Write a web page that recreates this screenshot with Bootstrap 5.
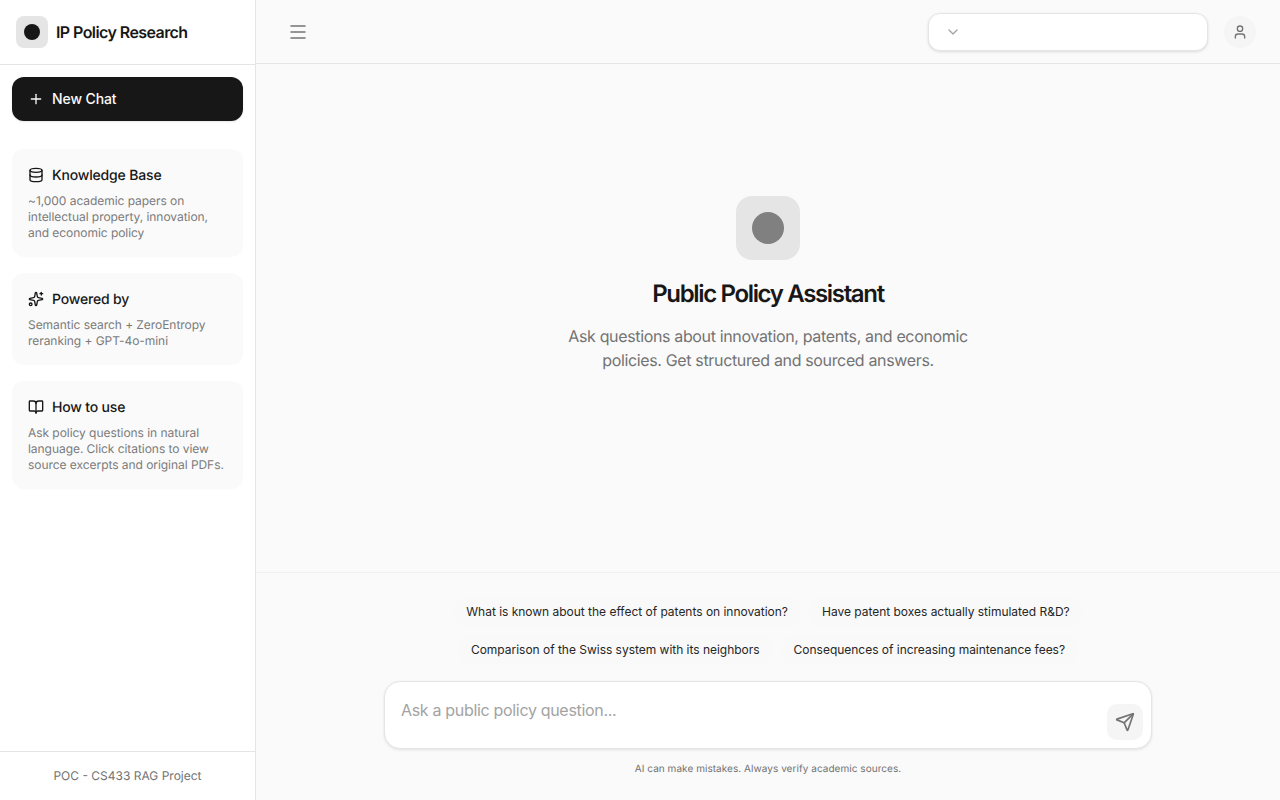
<!DOCTYPE html>
<html lang="en">
<head>
    <meta charset="UTF-8">
    <meta name="viewport" content="width=device-width, initial-scale=1.0">
    <title>IP Policy Research</title>
    <link href="https://cdn.jsdelivr.net/npm/bootstrap@5.3.0/dist/css/bootstrap.min.css" rel="stylesheet">
    <style>
        html, body { height: 100%; }
        body { font-family: Inter, "Liberation Sans", sans-serif; background: #fafafa; color: #171717; overflow: hidden; text-rendering: geometricPrecision; -webkit-font-smoothing: antialiased; }
        svg.ic { fill: none; stroke: currentColor; stroke-width: 2; stroke-linecap: round; stroke-linejoin: round; flex-shrink: 0; }

        .sidebar { width: 256px; background: #fff; border-right: 1px solid #e5e5e5; }
        .side-body { padding: 12px 12px 0; }
        .brand { height: 65px; padding: 0 16px; border-bottom: 1px solid #e5e5e5; }
        .brand-logo { width: 32px; height: 32px; border-radius: 8px; background: #e5e5e5; }
        .brand-logo span { width: 16px; height: 16px; border-radius: 50%; background: #171717; }
        .brand-name { font-size: 16px; font-weight: 600; letter-spacing: -0.58px; }
        .btn-new { height: 44px; padding: 0 15px; border-radius: 12px; background: #171717; color: #fafafa; font-size: 14px; font-weight: 500; letter-spacing: -0.1px; box-shadow: 0 1px 2px rgba(0,0,0,.1); }
        .btn-new:hover { background: #171717; color: #fafafa; }
        .btn-new span { margin-bottom: 2px; }
        .info-list { margin-top: 28px; }
        .info-card { background: #fafafa; border-radius: 12px; padding: 16px; }
        .info-title { height: 20px; font-size: 14px; font-weight: 500; line-height: 20px; letter-spacing: -0.17px; margin-bottom: 8px; }
        .info-title span { margin-top: 2px; }
        .info-text { font-size: 12px; line-height: 16px; letter-spacing: -0.05px; color: #7a7a7a; margin: 0; }
        .side-foot { height: 49px; border-top: 1px solid #e5e5e5; font-size: 12px; color: #737373; }

        .topbar { height: 64px; padding: 0 24px 0 32px; border-bottom: 1px solid #e5e5e5; }
        .menu-btn { color: #737373; }
        .menu-btn svg { stroke-width: 1.5; }
        .picker { width: 280px; height: 38px; padding: 0 16px; background: #fff; border: 1px solid #e5e5e5; border-radius: 12px; box-shadow: 0 1px 3px rgba(0,0,0,.12); color: #a3a3a3; }
        .avatar { width: 32px; height: 32px; border-radius: 50%; background: #f5f5f5; color: #737373; }

        .hero { padding-bottom: 68px; }
        .hero-logo { width: 64px; height: 64px; border-radius: 16px; background: #e5e5e5; margin-bottom: 18px; }
        .hero-logo span { width: 32px; height: 32px; border-radius: 50%; background: #808080; }
        .hero-title { font-size: 24px; line-height: 32px; font-weight: 600; letter-spacing: -1.35px; margin-bottom: 14px; }
        .hero-text { width: 448px; font-size: 16px; line-height: 24px; letter-spacing: -0.35px; color: #737373; margin: 0; }

        .composer { height: 228px; border-top: 1px solid #f0f0f0; padding-top: 24px; }
        .chips { gap: 8px; }
        .chip { height: 30px; padding: 0 13px; border-radius: 15px; background: #f9f9f9; font-size: 12px; letter-spacing: -0.02px; color: #262626; border: 0; }
        .inputbox { width: 768px; height: 68px; margin-top: 16px; padding: 16px; background: #fff; border: 1px solid #e5e5e5; border-radius: 16px; box-shadow: 0 1px 3px rgba(0,0,0,.1); }
        .inputbox input { border: 0; outline: 0; padding: 0; width: 100%; font-size: 16px; line-height: 24px; letter-spacing: -0.32px; color: #171717; background: transparent; display: block; }
        .inputbox input::placeholder { color: #a3a3a3; opacity: 1; }
        .send { position: absolute; right: 8px; bottom: 8px; width: 36px; height: 36px; border-radius: 10px; background: #f5f5f5; color: #737373; border: 0; }
        .note { font-size: 10px; line-height: 14px; letter-spacing: 0.05px; color: #737373; margin: 13px 0 0; }
    </style>
</head>
<body>
    <div class="d-flex h-100">
        <!-- sidebar -->
        <aside class="sidebar d-flex flex-column flex-shrink-0">
            <div class="brand d-flex align-items-center gap-2">
                <div class="brand-logo d-flex align-items-center justify-content-center"><span></span></div>
                <div class="brand-name">IP Policy Research</div>
            </div>
            <div class="side-body flex-grow-1 d-flex flex-column">
                <button class="btn btn-new d-flex align-items-center gap-2 w-100" type="button">
                    <svg class="ic" width="16" height="16" viewBox="0 0 24 24"><path d="M5 12h14"/><path d="M12 5v14"/></svg>
                    <span>New Chat</span>
                </button>
                <div class="info-list d-flex flex-column gap-3">
                    <div class="info-card">
                        <div class="info-title d-flex align-items-center gap-2">
                            <svg class="ic" width="16" height="16" viewBox="0 0 24 24"><ellipse cx="12" cy="5" rx="9" ry="3"/><path d="M3 5V19A9 3 0 0 0 21 19V5"/><path d="M3 12A9 3 0 0 0 21 12"/></svg>
                            <span>Knowledge Base</span>
                        </div>
                        <p class="info-text">~1,000 academic papers on intellectual property, innovation, and economic policy</p>
                    </div>
                    <div class="info-card">
                        <div class="info-title d-flex align-items-center gap-2">
                            <svg class="ic" width="16" height="16" viewBox="0 0 24 24"><path d="M11.017 2.814a1 1 0 0 1 1.966 0l1.051 5.558a2 2 0 0 0 1.594 1.594l5.558 1.051a1 1 0 0 1 0 1.966l-5.558 1.051a2 2 0 0 0-1.594 1.594l-1.051 5.558a1 1 0 0 1-1.966 0l-1.051-5.558a2 2 0 0 0-1.594-1.594l-5.558-1.051a1 1 0 0 1 0-1.966l5.558-1.051a2 2 0 0 0 1.594-1.594z"/><path d="M20 2v4"/><path d="M22 4h-4"/><circle cx="4" cy="20" r="2"/></svg>
                            <span>Powered by</span>
                        </div>
                        <p class="info-text">Semantic search + ZeroEntropy reranking + GPT-4o-mini</p>
                    </div>
                    <div class="info-card">
                        <div class="info-title d-flex align-items-center gap-2">
                            <svg class="ic" width="16" height="16" viewBox="0 0 24 24"><path d="M12 7v14"/><path d="M3 18a1 1 0 0 1-1-1V4a1 1 0 0 1 1-1h5a4 4 0 0 1 4 4 4 4 0 0 1 4-4h5a1 1 0 0 1 1 1v13a1 1 0 0 1-1 1h-6a3 3 0 0 0-3 3 3 3 0 0 0-3-3z"/></svg>
                            <span>How to use</span>
                        </div>
                        <p class="info-text">Ask policy questions in natural language. Click citations to view source excerpts and original PDFs.</p>
                    </div>
                </div>
            </div>
            <div class="side-foot d-flex align-items-center justify-content-center">POC - CS433 RAG Project</div>
        </aside>

        <!-- main -->
        <main class="flex-grow-1 d-flex flex-column">
            <header class="topbar d-flex align-items-center justify-content-between">
                <div class="menu-btn d-flex">
                    <svg class="ic" width="20" height="24" viewBox="0 0 20 24"><path d="M3 6h14"/><path d="M3 12h14"/><path d="M3 18h14"/></svg>
                </div>
                <div class="d-flex align-items-center gap-3">
                    <div class="picker d-flex align-items-center">
                        <svg class="ic" width="16" height="16" viewBox="0 0 24 24"><path d="m6 9 6 6 6-6"/></svg>
                    </div>
                    <div class="avatar d-flex align-items-center justify-content-center">
                        <svg class="ic" width="16" height="16" viewBox="0 0 24 24"><path d="M19 21v-2a4 4 0 0 0-4-4H9a4 4 0 0 0-4 4v2"/><circle cx="12" cy="7" r="4"/></svg>
                    </div>
                </div>
            </header>

            <section class="hero flex-grow-1 d-flex flex-column align-items-center justify-content-center text-center">
                <div class="hero-logo d-flex align-items-center justify-content-center"><span></span></div>
                <h1 class="hero-title">Public Policy Assistant</h1>
                <p class="hero-text">Ask questions about innovation, patents, and economic policies. Get structured and sourced answers.</p>
            </section>

            <section class="composer d-flex flex-column align-items-center flex-shrink-0">
                <div class="chips d-flex flex-column align-items-center">
                    <div class="d-flex chips">
                        <button class="chip" type="button">What is known about the effect of patents on innovation?</button>
                        <button class="chip" type="button">Have patent boxes actually stimulated R&amp;D?</button>
                    </div>
                    <div class="d-flex chips">
                        <button class="chip" type="button">Comparison of the Swiss system with its neighbors</button>
                        <button class="chip" type="button">Consequences of increasing maintenance fees?</button>
                    </div>
                </div>
                <div class="inputbox position-relative">
                    <input type="text" placeholder="Ask a public policy question...">
                    <button class="send d-flex align-items-center justify-content-center" type="button">
                        <svg class="ic" width="20" height="20" viewBox="0 0 24 24"><path d="M14.536 21.686a.5.5 0 0 0 .937-.024l6.5-19a.496.496 0 0 0-.635-.635l-19 6.5a.5.5 0 0 0-.024.937l7.93 3.18a2 2 0 0 1 1.112 1.11z"/><path d="m21.854 2.147-10.94 10.939"/></svg>
                    </button>
                </div>
                <p class="note">AI can make mistakes. Always verify academic sources.</p>
            </section>
        </main>
    </div>

    <script src="https://cdn.jsdelivr.net/npm/bootstrap@5.3.0/dist/js/bootstrap.bundle.min.js"></script>
</body>
</html>
